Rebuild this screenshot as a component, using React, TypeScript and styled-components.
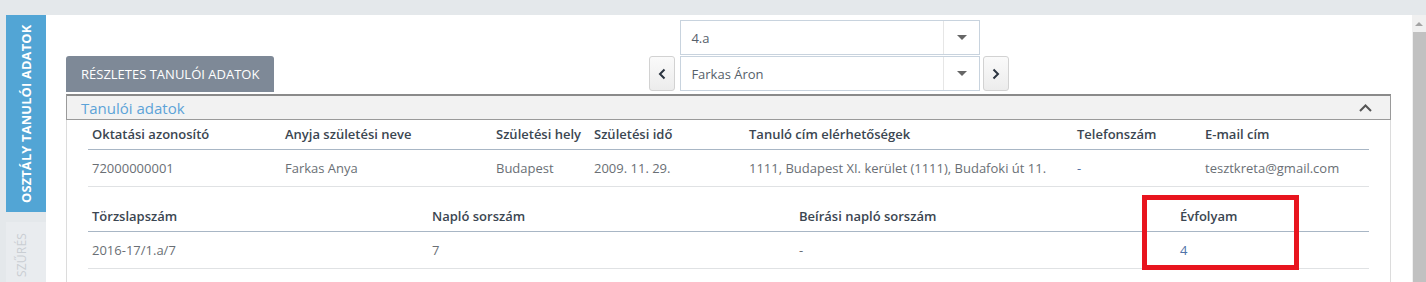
import React from 'react';
import styled, { createGlobalStyle } from 'styled-components';

const GlobalStyle = createGlobalStyle`
  html, body {
    margin: 0;
    padding: 0;
    background: #e4e8eb;
    font-family: "Open Sans", "Liberation Sans", sans-serif;
    font-size: 13px;
  }
`;

const firstColumns = [193, 211, 98, 155, 328, 128, 168];
const secondColumns = [340, 367, 381, 193];

const App = () => (
  <>
    <GlobalStyle />
    <Page>
      <Sidebar>
        <SideTab active>OSZTÁLY TANULÓI ADATOK</SideTab>
        <SideTab>SZŰRÉS</SideTab>
      </Sidebar>
      <Main>
        <Toolbar>
          <DetailsButton>RÉSZLETES TANULÓI ADATOK</DetailsButton>
          <Navigator>
            <ArrowButton>
              <Chevron dir="left" />
            </ArrowButton>
            <SelectStack>
              <Select>
                <SelectValue>4.a</SelectValue>
                <SelectCaret><Caret /></SelectCaret>
              </Select>
              <Select>
                <SelectValue>Farkas Áron</SelectValue>
                <SelectCaret><Caret /></SelectCaret>
              </Select>
            </SelectStack>
            <ArrowButton right>
              <Chevron dir="right" />
            </ArrowButton>
          </Navigator>
        </Toolbar>
        <Panel>
          <PanelHeader>
            <PanelTitle>Tanulói adatok</PanelTitle>
            <CollapseIcon />
          </PanelHeader>
          <PanelBody>
            <DataTable>
              <colgroup>
                {firstColumns.map((w, i) => <col key={i} style={{ width: w }} />)}
              </colgroup>
              <thead>
                <tr>
                  <Th>Oktatási azonosító</Th>
                  <Th>Anyja születési neve</Th>
                  <Th>Születési hely</Th>
                  <Th>Születési idő</Th>
                  <Th>Tanuló cím elérhetőségek</Th>
                  <Th>Telefonszám</Th>
                  <Th>E-mail cím</Th>
                </tr>
              </thead>
              <tbody>
                <tr>
                  <Td>72000000001</Td>
                  <Td>Farkas Anya</Td>
                  <Td>Budapest</Td>
                  <Td>2009. 11. 29.</Td>
                  <Td>1111, Budapest XI. kerület (1111), Budafoki út 11.</Td>
                  <Td link>-</Td>
                  <Td>tesztkreta@gmail.com</Td>
                </tr>
              </tbody>
            </DataTable>
            <SecondBlock>
              <DataTable>
                <colgroup>
                  {secondColumns.map((w, i) => <col key={i} style={{ width: w }} />)}
                </colgroup>
                <thead>
                  <tr>
                    <Th>Törzslapszám</Th>
                    <Th>Napló sorszám</Th>
                    <Th>Beírási napló sorszám</Th>
                    <Th>Évfolyam</Th>
                  </tr>
                </thead>
                <tbody>
                  <tr>
                    <Td>2016-17/1.a/7</Td>
                    <Td>7</Td>
                    <Td>-</Td>
                    <Td link>4</Td>
                  </tr>
                </tbody>
              </DataTable>
              <Highlight />
            </SecondBlock>
          </PanelBody>
        </Panel>
      </Main>
      <Scrollbar>
        <ScrollArrow />
        <ScrollThumb />
      </Scrollbar>
    </Page>
  </>
);

const Chevron = ({ dir }: { dir: 'left' | 'right' }) => (
  <svg width="8" height="12" viewBox="0 0 8 12">
    <path
      d={dir === 'left' ? 'M6.5 1.5 L2 6 L6.5 10.5' : 'M1.5 1.5 L6 6 L1.5 10.5'}
      fill="none"
      stroke="#2b3440"
      strokeWidth="2"
    />
  </svg>
);

const Caret = () => (
  <svg width="10" height="5" viewBox="0 0 10 5">
    <path d="M0 0 L10 0 L5 5 Z" fill="#666" />
  </svg>
);

const CollapseIcon = () => (
  <svg width="13" height="8" viewBox="0 0 13 8">
    <path d="M1 7 L6.5 1.5 L12 7" fill="none" stroke="#555" strokeWidth="2" />
  </svg>
);

const Page = styled.div`
  display: flex;
  height: 267px;
  padding-top: 15px;
  overflow: hidden;
  background: #e4e8eb;
`;

const Sidebar = styled.div`
  display: flex;
  flex-direction: column;
  gap: 10px;
  width: 40px;
  margin-left: 6px;
`;

const SideTab = styled.div<{ active?: boolean }>`
  display: flex;
  align-items: center;
  justify-content: center;
  flex-shrink: 0;
  height: ${(p) => (p.active ? '197px' : '66px')};
  background: ${(p) => (p.active ? '#52a5d5' : '#e9ecef')};
  color: ${(p) => (p.active ? '#fff' : '#c9ced3')};
  font-size: ${(p) => (p.active ? '12.8px' : '12px')};
  font-weight: ${(p) => (p.active ? 700 : 400)};
  letter-spacing: 0.2px;
  writing-mode: vertical-rl;
  transform: rotate(180deg);
  white-space: nowrap;
  padding-left: ${(p) => (p.active ? '0' : '10px')};
  box-sizing: border-box;
`;

const Main = styled.div`
  flex: 1;
  background: #fff;
  padding: 4px 21px 0 20px;
  box-sizing: border-box;
  min-width: 0;
`;

const Toolbar = styled.div`
  display: flex;
  align-items: flex-end;
  height: 75px;
`;

const DetailsButton = styled.div`
  display: flex;
  align-items: center;
  height: 36px;
  padding: 0 15px;
  margin-bottom: 2px;
  background: #7e8997;
  border-radius: 3px 3px 0 0;
  color: #fff;
  font-size: 13px;
  white-space: nowrap;
`;

const Navigator = styled.div`
  display: flex;
  align-items: flex-end;
  margin-left: 375px;
  margin-bottom: 3px;
`;

const ArrowButton = styled.div<{ right?: boolean }>`
  display: flex;
  align-items: center;
  justify-content: center;
  width: 26px;
  height: 35px;
  margin: ${(p) => (p.right ? '0 0 0 3px' : '0 5px 0 0')};
  border: 1px solid #d2d2d2;
  border-radius: 3px;
  background: linear-gradient(#fafafa, #ececec);
  box-sizing: border-box;
`;

const SelectStack = styled.div`
  display: flex;
  flex-direction: column;
  gap: 1px;
  width: 300px;
`;

const Select = styled.div`
  display: flex;
  height: 35px;
  border: 1px solid #c8d3de;
  box-sizing: border-box;
  background: #fff;
`;

const SelectValue = styled.div`
  flex: 1;
  display: flex;
  align-items: center;
  padding-left: 10px;
  color: #56606a;
  font-size: 13px;
`;

const SelectCaret = styled.div`
  display: flex;
  align-items: center;
  justify-content: center;
  width: 35px;
  border-left: 1px solid #e6e6e6;
`;

const Panel = styled.div`
  display: flex;
  flex-direction: column;
`;

const PanelHeader = styled.div`
  display: flex;
  align-items: center;
  justify-content: space-between;
  height: 26px;
  padding: 0 18px 0 14px;
  background: #f2f2f2;
  border: 1px solid #9a9a9a;
  border-top: 2px solid #8a8a8a;
  box-sizing: border-box;
`;

const PanelTitle = styled.div`
  color: #5ca3d8;
  font-size: 15px;
`;

const PanelBody = styled.div`
  padding: 0 21px 40px 21px;
  border-left: 1px solid #dcdcdc;
  border-right: 1px solid #dcdcdc;
`;

const DataTable = styled.table`
  width: 100%;
  table-layout: fixed;
  border-collapse: collapse;
`;

const Th = styled.th`
  height: 27px;
  padding: 0 4px 2px;
  text-align: left;
  color: #3b4651;
  font-size: 13px;
  font-weight: 600;
  white-space: nowrap;
  border-bottom: 1px solid #a8b6c5;
`;

const Td = styled.td<{ link?: boolean }>`
  height: 36px;
  padding: 0 4px;
  color: ${(p) => (p.link ? '#4f73a8' : '#6a6f75')};
  font-size: 13px;
  white-space: nowrap;
  border-bottom: 1px solid #e0e2e4;
`;

const SecondBlock = styled.div`
  position: relative;
  margin-top: 15px;
`;

const Highlight = styled.div`
  position: absolute;
  left: 1054px;
  top: -7px;
  width: 157px;
  height: 75px;
  border: 5px solid #e8141e;
  box-sizing: border-box;
`;

const Scrollbar = styled.div`
  display: flex;
  flex-direction: column;
  width: 14px;
  background: #f0f0f0;
`;

const ScrollArrow = styled.div`
  height: 17px;
  display: flex;
  align-items: center;
  justify-content: center;
  &::before {
    content: '';
    border-left: 4px solid transparent;
    border-right: 4px solid transparent;
    border-bottom: 4px solid #a3a3a3;
  }
`;

const ScrollThumb = styled.div`
  flex: 1;
  margin-left: 1px;
  background: #c1c1c1;
`;

export default App;
